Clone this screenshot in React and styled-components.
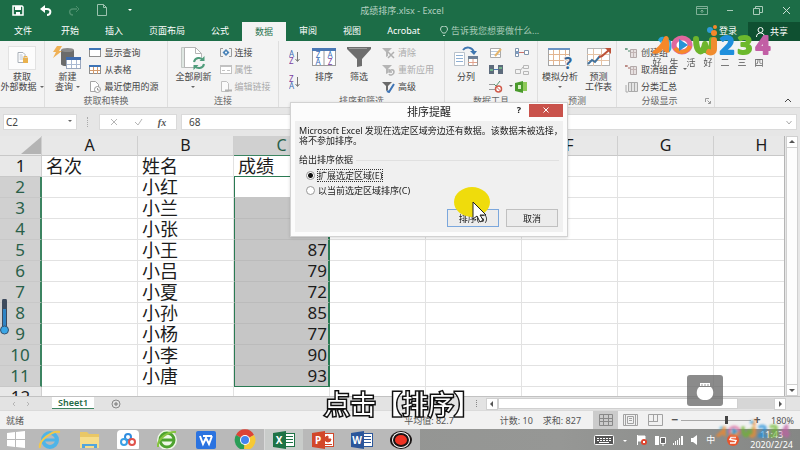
import React, { useState } from "react";
import styled, { createGlobalStyle, css } from "styled-components";

const GlobalStyle = createGlobalStyle`
  * {
    box-sizing: border-box;
  }
  body {
    margin: 0;
    overflow: hidden;
    font-family: "Noto Sans", "Noto Sans CJK SC", sans-serif;
    font-size: 9px;
    color: #444;
  }
  button, input {
    font: inherit;
    color: inherit;
    margin: 0;
    padding: 0;
    border: 0;
    background: none;
  }
  svg {
    display: block;
    flex: none;
  }
`;

const columns = ["A", "B", "C", "D", "E", "F", "G", "H"];

const rows = [
  ["名次", "姓名", "成绩"],
  ["", "小红", ""],
  ["", "小兰", ""],
  ["", "小张", ""],
  ["", "小王", "87"],
  ["", "小吕", "79"],
  ["", "小夏", "72"],
  ["", "小孙", "85"],
  ["", "小杨", "77"],
  ["", "小李", "90"],
  ["", "小唐", "93"],
  ["", "", ""],
];

const tabs = ["开始", "插入", "页面布局", "公式", "数据", "审阅", "视图", "Acrobat"];

/* ---------- ribbon icons ---------- */

const ExternalDataIcon = () => (
  <svg width="28" height="24" viewBox="0 0 28 24">
    <rect x="0.5" y="0.5" width="27" height="23" fill="#fcfcfc" stroke="#e2e2e2" />
    <path d="M10 6.500h5l2 2v8h-7z" fill="#fff" stroke="#a9b0b8" />
    <path d="M11.500 9h3M11.500 11h4M11.500 13h4" stroke="#b9c4d2" />
    <path d="M15 12h5v5h-5z" fill="#eab24e" />
    <path d="M16 12v-1.500h3V12" fill="none" stroke="#eab24e" />
  </svg>
);

const NewQueryIcon = () => (
  <svg width="28" height="24" viewBox="0 0 28 24">
    <path d="M8 4v14c0 3 13 3 13 0V4z" fill="#6b6b6b" />
    <ellipse cx="14.500" cy="4" rx="6.500" ry="2" fill="#8b8b8b" />
    <path d="M4 0h5L6 5h3L0 12l3-6H0z" fill="#efb055" />
    <rect x="13.500" y="11.500" width="14" height="11" fill="#fff" stroke="#9aa7bd" />
    <path d="M13 11h15v3H13z" fill="#3f6cae" />
    <path d="M14 18.500h13M18.500 14v8M23.500 14v8" stroke="#a9b9d2" />
  </svg>
);

const RefreshAllIcon = () => (
  <svg width="26" height="24" viewBox="0 0 26 24">
    <path d="M1.500 1.500h10v20h-10z" fill="#dfe7e2" stroke="#c2c7c4" />
    <path d="M4.500 1.500h11l6 6v14h-17z" fill="#fff" stroke="#b5b5b5" />
    <path d="M15.500 1.500v6h6" fill="none" stroke="#b5b5b5" />
    <circle cx="19" cy="17" r="6" fill="#f4f4f4" />
    <path d="M14 16c1-5 7-5 9-2M24 18c-1 5-7 5-9 2" fill="none" stroke="#4f9c7b" strokeWidth="2" />
    <path d="M24.500 10v5h-5zM13.500 24v-5h5z" fill="#4f9c7b" />
  </svg>
);

const SortIcon = () => (
  <svg width="24" height="22" viewBox="0 0 24 22">
    <rect x="0.500" y="2.500" width="23" height="17" fill="#fff" stroke="#9a9a9a" />
    <path d="M0 2h24v3H0z" fill="#4a78b4" />
    <path d="M12 5v15" stroke="#9a9a9a" />
    <g fontSize="8" fontFamily="Noto Sans" textAnchor="middle">
      <text x="6" y="12" fill="#3b6db5">Z</text>
      <text x="6" y="19" fill="#3b6db5">A</text>
      <text x="18" y="12" fill="#3b6db5">A</text>
      <text x="18" y="19" fill="#7a3fa0">Z</text>
    </g>
  </svg>
);

const FunnelIcon = () => (
  <svg width="24" height="22" viewBox="0 0 24 22">
    <path d="M0 1h24v2l-9 10v7l-5 1v-8L0 3z" fill="#6e6e6e" />
    <path d="M2 2.500h18" stroke="#9c9c9c" />
  </svg>
);

const TextToColumnsIcon = () => (
  <svg width="26" height="22" viewBox="0 0 26 22">
    <path d="M1.500 6.500h10v13h-10z" fill="#fff" stroke="#b9c2cb" />
    <path d="M3 9.500h7M3 12.500h7M3 15.500h7" stroke="#8fb0d4" />
    <path d="M15.500 11.500h9v8h-9z" fill="#fff" stroke="#999" />
    <path d="M15 10h10v3H15z" fill="#6e7f96" />
    <path d="M15 16.500h9M20 13v7" stroke="#e0a08a" />
    <path d="M10 4c3-4 9-3 11 2" fill="none" stroke="#3f76b0" strokeWidth="2" />
    <path d="M17 5h7l-3 4z" fill="#3f76b0" />
  </svg>
);

const WhatIfIcon = () => (
  <svg width="26" height="24" viewBox="0 0 26 24">
    <rect x="1.500" y="2.500" width="21" height="17" fill="#fff" stroke="#a4a4a4" />
    <path d="M1 2h22v2H1z" fill="#6b93c4" />
    <path d="M2 8.500h20M2 14.500h20M6.500 4v15M12.500 4v15M18.500 4v15" stroke="#e2b591" />
    <text x="21" y="23" fontSize="16" fontWeight="700" textAnchor="middle" fill="#336596" stroke="#f4f4f4" strokeWidth="2" paintOrder="stroke">?</text>
  </svg>
);

const ForecastIcon = () => (
  <svg width="26" height="24" viewBox="0 0 26 24">
    <rect x="1.500" y="2.500" width="22" height="17" fill="#fff" stroke="#b4b4b4" />
    <path d="M1 8.500h22M1 14.500h22M7.500 3v17M15.500 3v17" stroke="#e6c3a5" />
    <path d="M2 18l4-4 3 2 5-6" fill="none" stroke="#41719c" strokeWidth="2" />
    <path d="M13 11l3-1 7-6" fill="none" stroke="#bd5238" strokeWidth="2" />
    <path d="M19 2h6v6z" fill="#bd5238" />
  </svg>
);

const TableIcon = ({ split, dim }) => (
  <svg width="12" height="11" viewBox="0 0 12 11">
    <rect x="0.500" y="1.500" width="11" height="8" fill="#fff" stroke={dim ? "#c2c2c2" : "#8e8e8e"} />
    <path d="M0 1h12v2H0z" fill={dim ? "#c2c2c2" : "#3f74b5"} />
    {split && <path d="M1 6.500h10M4.500 3v7M8.500 3v7" stroke="#d39b6d" />}
    {dim && <path d="M2 6.500h3M7 6.500h3" stroke="#c2c2c2" />}
  </svg>
);

const RecentIcon = () => (
  <svg width="12" height="12" viewBox="0 0 12 12">
    <path d="M1.500 0.500h5l3 3v7h-8z" fill="#fff" stroke="#a5a5a5" />
    <circle cx="8.500" cy="8.500" r="3" fill="#fff" stroke="#9a9a9a" />
    <path d="M8.500 7v2h2" fill="none" stroke="#9a9a9a" />
  </svg>
);

const ConnectionsIcon = () => (
  <svg width="12" height="11" viewBox="0 0 12 11">
    <path d="M3 1.500H0.500v8H3M9 1.500h2.500v8H9" fill="none" stroke="#9b9b9b" />
    <path d="M6 2l3.500 3.500L6 9 2.500 5.500z" fill="#4a83b8" />
    <circle cx="6" cy="5.500" r="1" fill="#fff" />
  </svg>
);

const EditLinksIcon = () => (
  <svg width="12" height="12" viewBox="0 0 12 12">
    <path d="M1.500 0.500h5l2 2v8h-7z" fill="#fafafa" stroke="#c0c0c0" />
    <path d="M5 9.500h3M8 9.500h4" stroke="#b2b2b2" strokeWidth="2" />
  </svg>
);

const AzIcon = ({ top, bottom }) => (
  <svg width="12" height="14" viewBox="0 0 12 14">
    <g fontSize="8" fontFamily="Noto Sans">
      <text x="0" y="7" fill={top === "A" ? "#3b6db5" : "#7a3fa0"}>{top}</text>
      <text x="0" y="14" fill={bottom === "A" ? "#3b6db5" : "#7a3fa0"}>{bottom}</text>
    </g>
    <path d="M8.500 2v9M6.500 9l2 2.500 2-2.500" fill="none" stroke="#777" />
  </svg>
);

const SmallFilterIcon = ({ kind }) => (
  <svg width="13" height="12" viewBox="0 0 13 12">
    <path d="M0 1h10L6 5v4l-2 1V5z" fill={kind === "advanced" ? "#6a6a6a" : "#b5b5b5"} />
    {kind === "clear" && <path d="M6 5l6 6M12 5l-6 6" stroke="#b0b0b0" strokeWidth="1.500" />}
    {kind === "reapply" && (
      <path d="M7 5v3h3M7 8c1-3 5-3 5 0s-4 4-5 2" fill="none" stroke="#b0b0b0" strokeWidth="1.500" />
    )}
    {kind === "advanced" && <path d="M5 10l2 1 5-8" fill="none" stroke="#3f74b5" strokeWidth="2" />}
  </svg>
);

const OutlineIcon = ({ kind }) => (
  <svg width="13" height="12" viewBox="0 0 13 12">
    {kind === "total" ? (
      <>
        <path d="M3.500 1.500h9v9h-9z" fill="#e4e4e4" stroke="#aaa" />
        <path d="M6.500 2v8M9.500 2v8M1 4v7h2" fill="none" stroke="#aaa" />
      </>
    ) : (
      <>
        <path d="M5.500 2.500h6v8h-6z" fill="#e6e0e0" stroke="#b3a9a9" />
        <path d="M6 5.500h5M8.500 3v7" stroke="#c3b5b5" />
        <path d="M0 2h3M3 4h2M1 1v2" stroke={kind === "group" ? "#4e8a6c" : "#a86a63"} />
      </>
    )}
  </svg>
);

const ToolIcon = ({ kind }) => (
  <svg width="14" height="12" viewBox="0 0 14 12">
    {kind === "fill" && (
      <>
        <path d="M1.500 1.500h10v9h-10z" fill="#fff" stroke="#aaa" />
        <path d="M2 4.500h9M2 7.500h9" stroke="#b9c9dc" />
        <path d="M6 9l6-7" stroke="#e5b56c" strokeWidth="2" />
      </>
    )}
    {kind === "dedupe" && (
      <>
        <path d="M0 1h5v9H0z" fill="#5d6b7c" />
        <path d="M9 1h5v9H9z" fill="#5d6b7c" />
        <path d="M1 5h3v2H1zM10 3h3v2h-3z" fill="#72b389" />
        <path d="M5 5.500h4" stroke="#4a78b4" />
      </>
    )}
    {kind === "validate" && (
      <>
        <path d="M0 3.500h6M0 8.500h6" stroke="#9a9a9a" />
        <path d="M5 3l2 2 4-5" fill="none" stroke="#5a9474" />
        <circle cx="9.500" cy="8" r="3" fill="#fff" stroke="#d05b4b" strokeWidth="1.500" />
        <path d="M7.500 6l4 4" stroke="#d05b4b" />
      </>
    )}
    {kind === "merge" && (
      <>
        <path d="M0.500 1.500h3v8h-3zM9.500 3.500h4v4h-4z" fill="#fff" stroke="#8195ac" />
        <path d="M4 5.500h5" stroke="#c9716a" />
        <path d="M1 4h3v3H1z" fill="#7f9cc0" />
      </>
    )}
    {kind === "relation" && (
      <path d="M0.500 5.500h5v4h-5zM8.500 1.500h5v3h-5zM8.500 7.500h5v3h-5zM5 7l3-4" fill="none" stroke="#b7b7b7" />
    )}
    {kind === "model" && (
      <>
        <path d="M0 2l8-2v12l-8-2z" fill="#4a9a2c" />
        <path d="M8 1h4v9H8z" fill="#8fca5a" />
        <path d="M3 4h3v4H3z" fill="#d7efc5" />
      </>
    )}
  </svg>
);

/* ---------- logo ---------- */

const Logo = ({ width, height }) => (
  <svg width={width} height={height} viewBox="0 0 124 32">
    <path d="M2 28c2-4 8-6 11-14 1-4 6-4 6 1l1 12c-3 2-6 0-7-3-2 4-7 6-11 4z" fill="#f6882a" />
    <path d="M8 15c1-3 4-4 6-3l-3 6z" fill="#28a4dc" />
    <path d="M16 13c5 2 3 9 3 14 3-1 3-6 2-11z" fill="#35a7dc" />
    <ellipse cx="32" cy="20" rx="8" ry="7" fill="#fff" stroke="#e0679e" strokeWidth="5" />
    <path d="M25 23c4 6 12 5 15-2" fill="none" stroke="#f6882a" strokeWidth="4" />
    <path d="M29 14l9 6-9 6z" fill="#2793d6" />
    <path d="M46 14c0 15 7 16 9 5 1 11 7 9 7-4" fill="none" stroke="#6db52c" strokeWidth="6" strokeLinecap="round" strokeLinejoin="round" />
    <path d="M64 15v9c0 3-3 4-5 3" fill="none" stroke="#f08c2e" strokeWidth="6" strokeLinecap="round" />
    <circle cx="60" cy="5" r="3" fill="#2f9bd7" />
    <circle cx="65" cy="2" r="2" fill="#f6882a" />
    <circle cx="64" cy="8" r="3" fill="#f6882a" />
    <g fontSize="25" fontWeight="700" fontFamily="Noto Sans" textAnchor="middle" strokeWidth="2" strokeLinejoin="round">
      <text x="77" y="29" fill="#1f8fdc" stroke="#1f8fdc">2</text>
      <text x="95" y="29" fill="#6cb92d" stroke="#6cb92d">3</text>
      <text x="113" y="29" fill="#c25fa5" stroke="#c25fa5">4</text>
    </g>
  </svg>
);

/* ---------- taskbar icons ---------- */

const OfficeMark = ({ name }) => {
  const [color, letter] = {
    excel: ["#1f7346", "X"],
    ppt: ["#d2472a", "P"],
    word: ["#2b569a", "W"],
  }[name];
  return (
    <>
      <rect x="11.500" y="4.500" width="11" height="13" fill="#fff" stroke={color} />
      {name === "ppt" ? (
        <path d="M17 7a3 3 0 1 0 3 3h-3zM14 15.500h7" fill={color} stroke={color} />
      ) : (
        <path d="M14 7.500h7M14 10.500h7M14 13.500h7" stroke={color} />
      )}
      <path d="M1 4l13-2v18L1 18z" fill={color} />
      <text x="7" y="15" fontSize="10" fontWeight="700" textAnchor="middle" fill="#fff">{letter}</text>
    </>
  );
};

const AppIcon = ({ name }) => (
  <svg width="24" height="20" viewBox="0 0 24 20">
    {name === "windows" && (
      <path d="M3 4l8-1v7H3zM12 3l9-1v8h-9zM3 11h8v7l-8-1zM12 11h9v8l-9-1z" fill="#fff" />
    )}
    {name === "ie" && (
      <>
        <circle cx="12" cy="11" r="7" fill="none" stroke="#4fb4e8" strokeWidth="4" />
        <path d="M7 11h12" stroke="#4fb4e8" strokeWidth="3" />
        <path d="M2 19C0 12 14 1 22 3" fill="none" stroke="#f1c84c" strokeWidth="2" />
      </>
    )}
    {name === "folder" && (
      <>
        <path d="M3 3h7l2 2h10v14H3z" fill="#e9c766" />
        <path d="M3 8h19v11H3z" fill="#f6dd8b" />
        <path d="M5 19v-4h15v4h-3v-2H8v2z" fill="#53a5dc" />
      </>
    )}
    {name === "baidu" && (
      <>
        <rect x="1" y="1" width="22" height="21" rx="4" fill="#fff" />
        <circle cx="12" cy="8" r="3" fill="none" stroke="#2f8ce0" strokeWidth="2" />
        <circle cx="8" cy="13" r="3" fill="none" stroke="#3aa0e6" strokeWidth="2" />
        <circle cx="16" cy="13" r="3" fill="none" stroke="#e0524b" strokeWidth="2" />
      </>
    )}
    {name === "browser360" && (
      <>
        <circle cx="12" cy="11" r="10" fill="#eef7e6" />
        <circle cx="12" cy="11" r="7" fill="none" stroke="#4da32f" strokeWidth="3" />
        <path d="M6 11h13" stroke="#4da32f" strokeWidth="3" />
        <path d="M3 18C2 10 13 2 21 3" fill="none" stroke="#86c440" strokeWidth="2" />
      </>
    )}
    {name === "wps" && (
      <>
        <rect x="2" y="2" width="20" height="18" rx="2" fill="#2b73e0" />
        <path d="M6 7l3 8 3-6 3 6 3-8M9 7h9" fill="none" stroke="#fff" strokeWidth="2" />
      </>
    )}
    {name === "chrome" && (
      <>
        <path d="M12 11L3 6a10 10 0 0 1 18 0z" fill="#dc4437" />
        <path d="M12 11L3 6a10 10 0 0 0 8 15z" fill="#2a9d57" />
        <path d="M12 11l9-5a10 10 0 0 1-10 15z" fill="#f6c935" />
        <circle cx="12" cy="11" r="5" fill="#fff" />
        <circle cx="12" cy="11" r="4" fill="#4484f0" />
      </>
    )}
    {["excel", "ppt", "word"].includes(name) && <OfficeMark name={name} />}
    {name === "record" && (
      <>
        <ellipse cx="12" cy="11" rx="11" ry="9" fill="#1b1414" />
        <ellipse cx="12" cy="11" rx="9" ry="8" fill="#fff" />
        <ellipse cx="12" cy="11" rx="8" ry="7" fill="#1b1414" />
        <ellipse cx="12" cy="11" rx="6" ry="5" fill="#ef3324" />
      </>
    )}
  </svg>
);

/* ---------- window chrome ---------- */

const Window = styled.div`
  display: flex;
  flex-direction: column;
  height: 100vh;
  background: #e6e6e6;
`;

const TitleBar = styled.header`
  display: grid;
  grid-template-columns: 1fr auto 1fr;
  align-items: center;
  height: 20px;
  padding: 0 8px 0 12px;
  background: #1c6d47;
  color: #b4d0c1;
`;

const QuickAccess = styled.div`
  display: flex;
  align-items: center;
  gap: 16px;
`;

const WindowButtons = styled.div`
  display: flex;
  justify-content: flex-end;
  align-items: center;
  gap: 16px;
`;

const IconButton = styled.button`
  display: flex;
  align-items: center;
  justify-content: center;
  min-width: 12px;
  height: 14px;
`;

const TabBar = styled.nav`
  display: flex;
  align-items: center;
  height: 21px;
  background: #1c6d47;
  color: #fff;
  line-height: 19px;
`;

const Tab = styled.button`
  height: 100%;
  padding: 0 13px;
  white-space: nowrap;
  ${({ $active }) =>
    $active &&
    css`
      height: 19px;
      align-self: flex-end;
      background: #f3f3f3;
      color: #2a7350;
    `}
`;

const FileTab = styled(Tab)`
  padding: 0 16px 0 14px;
`;

const TellMe = styled.button`
  display: flex;
  align-items: center;
  gap: 3px;
  margin-left: 7px;
  color: #a9cbb9;
`;

const SignIn = styled.button`
  margin-left: auto;
  padding: 0 11px;
`;

const Share = styled.button`
  display: flex;
  align-items: center;
  gap: 5px;
  height: 19px;
  padding: 0 12px 0 8px;
  align-self: flex-end;
  background: #0f5031;
`;

const Ribbon = styled.section`
  display: flex;
  height: 67px;
  background: #f3f3f3;
  border-bottom: 1px solid #d5d5d5;
`;

const Group = styled.div`
  display: flex;
  flex-direction: column;
  flex: none;
  width: ${({ $width }) => $width}px;
  padding-top: 3px;
  border-right: 1px solid #dedede;
`;

const GroupBody = styled.div`
  display: flex;
  justify-content: ${({ $start }) => ($start ? "flex-start" : "center")};
  gap: ${({ $gap }) => $gap || 8}px;
  height: 51px;
  padding: 0 ${({ $start }) => ($start ? 8 : 0)}px;
`;

const GroupLabel = styled.div`
  display: flex;
  align-items: center;
  height: 12px;
  line-height: 12px;
  color: #666;

  span {
    flex: 1;
    text-align: center;
  }
`;

const BigButton = styled.button`
  display: flex;
  flex-direction: column;
  align-items: center;
  padding-top: 2px;
  line-height: 10px;
  white-space: nowrap;
`;

const BigIcon = styled.span`
  display: flex;
  height: 26px;
`;

const SmallStack = styled.div`
  display: grid;
  grid-template-rows: repeat(${({ $rows }) => $rows || 3}, 1fr);
  column-gap: 2px;
  grid-auto-flow: column;
  align-items: center;
`;

const SmallButton = styled.button`
  display: flex;
  align-items: center;
  gap: 3px;
  line-height: 12px;
  white-space: nowrap;
  color: ${({ disabled }) => (disabled ? "#aaa" : "#444")};
`;

const Caret = styled.span`
  display: inline-block;
  margin: 0 0 2px 3px;
  border: 2px solid transparent;
  border-top-color: #666;
  border-bottom: 0;
`;

const LoneCaret = styled(Caret)`
  margin: 4px 0 0;
`;

const RibbonEnd = styled.div`
  display: flex;
  flex: 1;
  align-items: flex-end;
  justify-content: flex-end;
  padding: 0 6px 0 0;
`;

const FormulaBar = styled.div`
  display: flex;
  align-items: center;
  height: 28px;
  padding: 0 3px;
  gap: 4px;
`;

const NameBox = styled.div`
  display: flex;
  align-items: center;
  width: 74px;
  height: 16px;
  padding-right: 4px;
  background: #fff;
  border: 1px solid #dadada;

  input {
    flex: 1;
    min-width: 0;
    padding-left: 2px;
    font-size: 10px;
  }
`;

const Grip = styled.span`
  width: 7px;
  height: 10px;
  border-right: 1px dotted #aaa;
  margin-right: 7px;
`;

const FormulaButtons = styled.div`
  display: flex;
  align-items: center;
  justify-content: space-between;
  width: 78px;
  height: 16px;
  padding: 0 8px;
  background: #fff;
  border: 1px solid #dadada;
  color: #aaa;
`;

const FxButton = styled(IconButton)`
  font-family: "Liberation Serif", serif;
  font-style: italic;
  font-weight: 700;
  font-size: 10px;
  color: #555;
`;

const FormulaField = styled.div`
  display: flex;
  align-items: center;
  flex: 1;
  height: 16px;
  padding-right: 4px;
  background: #fff;
  border: 1px solid #dadada;

  input {
    flex: 1;
    padding-left: 7px;
    font-size: 10px;
  }
`;

/* ---------- sheet ---------- */

const Workspace = styled.main`
  display: flex;
  flex: 1;
  min-height: 0;
`;

const SheetArea = styled.div`
  flex: 1;
  min-width: 0;
  overflow: hidden;
  background: #fff;
  border-right: 1px solid #b5b5b5;
`;

const Sheet = styled.table`
  table-layout: fixed;
  width: 810px;
  border-collapse: separate;
  border-spacing: 0;
  color: #1c1c1c;
`;

const ColumnHead = styled.th`
  width: ${({ $corner }) => ($corner ? 42 : 96)}px;
  height: 20px;
  padding: 0;
  font-size: 16px;
  font-weight: 400;
  line-height: 19px;
  background: ${({ $selected }) => ($selected ? "#d0d0d0" : "#e8e8e8")};
  color: ${({ $selected }) => ($selected ? "#2a6049" : "#1c1c1c")};
  border-right: 1px solid #cfcfcf;
  border-bottom: 1px solid ${({ $selected }) => ($selected ? "#3c8461" : "#c8c8c8")};
`;

const CornerMark = styled.span`
  display: block;
  width: 0;
  margin-left: auto;
  border-left: 20px solid transparent;
  border-bottom: 17px solid #b4b4b4;
`;

const RowHead = styled.th`
  height: 21px;
  padding: 0;
  font-size: 17px;
  font-weight: 400;
  line-height: 20px;
  background: ${({ $selected }) => ($selected ? "#d0d0d0" : "#e8e8e8")};
  color: ${({ $selected }) => ($selected ? "#2a6049" : "#1c1c1c")};
  border-bottom: 1px solid #c8c8c8;
  border-right: ${({ $selected }) => ($selected ? "2px solid #3c8461" : "1px solid #cfcfcf")};
`;

const Cell = styled.td`
  height: 21px;
  padding: 0 1px 0 4px;
  overflow: hidden;
  font-size: ${({ $number }) => ($number ? 17 : 18)}px;
  line-height: 20px;
  text-align: ${({ $number }) => ($number ? "right" : "left")};
  white-space: nowrap;
  border-right: 1px solid #e2e2e2;
  border-bottom: 1px solid #e2e2e2;
  ${({ $selected }) =>
    $selected &&
    css`
      background: #c6c6c6;
      border-bottom-color: #bbb;
      border-left: 1px solid #2a7a53;
      border-right: 2px solid #2a7a53;
    `}
  ${({ $edge }) => $edge === "top" && "background: #fff; border-bottom-color: #c6c6c6;"}
  ${({ $edge }) => ($edge === "bottom" || $edge === "above") && "border-bottom: 1px solid #2a7a53;"}
`;

const VScroll = styled.div`
  display: flex;
  flex-direction: column;
  justify-content: space-between;
  width: 12px;
  margin: 0 2px 0 1px;
  background: #fdfdfd;
  border: 1px solid #d0d0d0;
`;

const ScrollButton = styled.button`
  display: flex;
  align-items: center;
  justify-content: center;
  width: 10px;
  height: 10px;
  background: #fff;
  outline: 1px solid #d0d0d0;
`;

const SheetBar = styled.div`
  display: flex;
  align-items: center;
  height: 14px;
  padding-right: 15px;
  background: #e3e3e3;
  border-top: 1px solid #c2c2c2;
`;

const SheetNav = styled.div`
  display: flex;
  gap: 10px;
  width: 52px;
  padding-left: 12px;
`;

const SheetTab = styled.button`
  height: 12px;
  padding: 0 6px;
  align-self: flex-start;
  background: #fff;
  border-bottom: 1px solid #3c8461;
  color: #1f6a45;
  font-weight: 600;
  line-height: 11px;
`;

const AddSheet = styled.button`
  margin-left: 17px;
`;

const SheetSpacer = styled.span`
  flex: 1;
`;

const SplitGrip = styled.span`
  height: 7px;
  margin-right: 10px;
  border-left: 1px dotted #888;
`;

const HScroll = styled.div`
  display: flex;
  align-items: center;
  width: 38%;
  height: 11px;
  background: #d6d6d6;
`;

const HThumb = styled.span`
  width: 240px;
  height: 11px;
  margin: 0 auto 0 1px;
  background: #fff;
  border: 1px solid #d0d0d0;
`;

const StatusBar = styled.footer`
  display: flex;
  align-items: center;
  height: 19px;
  padding: 0 6px;
  background: #f1f1f1;
  border-top: 1px solid #dadada;
  color: #555;
  white-space: nowrap;
`;

const Stats = styled.div`
  display: flex;
  gap: 10px;
  margin: 0 12px 0 auto;

  span:first-child {
    margin-right: 36px;
  }
`;

const ViewButton = styled(IconButton)`
  width: 25px;
  height: 18px;
  background: ${({ $active }) => ($active ? "#cbcbcb" : "transparent")};
`;

const ZoomControl = styled.label`
  display: flex;
  align-items: center;
  gap: 2px;
  margin: 0 10px 0 3px;

  input {
    appearance: none;
    width: 70px;
    height: 10px;
  }
  input::-webkit-slider-runnable-track {
    height: 1px;
    background: #a8a8a8;
  }
  input::-webkit-slider-thumb {
    appearance: none;
    width: 3px;
    height: 8px;
    margin-top: -4px;
    background: #444;
  }
`;

const ZoomStep = styled.button`
  width: 8px;
  font-size: 12px;
  font-weight: 700;
  line-height: 12px;
`;

/* ---------- taskbar ---------- */

const Taskbar = styled.div`
  display: flex;
  height: 21px;
  overflow: hidden;
  background: linear-gradient(90deg, #8f918f, #969795 70%, #858785);
`;

const Apps = styled.div`
  display: flex;
  background: #b9b9b9;
`;

const AppButton = styled.button`
  display: flex;
  justify-content: center;
  width: ${({ $first }) => ($first ? 30 : 39)}px;
  height: 21px;
  background: ${({ $open }) => ($open ? "#c9ccca" : "transparent")};
  border-left: 1px solid ${({ $open }) => ($open ? "#d9d9d9" : "transparent")};
`;

const Tray = styled.div`
  display: flex;
  align-items: center;
  gap: 6px;
  margin-left: auto;
  padding-right: 7px;
  color: #fff;
`;

const Clock = styled.time`
  margin-left: 3px;
  line-height: 10px;
  text-align: center;
`;

/* ---------- dialog ---------- */

const Dialog = styled.section`
  position: fixed;
  left: 50%;
  top: 102px;
  width: 278px;
  margin-left: -110px;
  padding: 0 4px 4px;
  background: #fcfcfc;
  border: 1px solid #d2d2d2;
  box-shadow: 0 1px 3px rgba(0, 0, 0, 0.15);
  color: #222;
`;

const DialogTitle = styled.div`
  display: grid;
  grid-template-columns: 1fr auto 1fr;
  align-items: start;
  height: 18px;

  h1 {
    margin: 0;
    font-size: 11px;
    font-weight: 400;
    line-height: 18px;
  }
`;

const DialogTools = styled.div`
  display: flex;
  justify-content: flex-end;
  align-items: center;
`;

const HelpButton = styled.button`
  width: 20px;
  font-weight: 700;
  line-height: 14px;
`;

const CloseButton = styled.button`
  display: flex;
  align-items: center;
  justify-content: center;
  width: 34px;
  height: 13px;
  background: #c9524b;
`;

const DialogBody = styled.form`
  padding: 5px 4px 5px;
  background: #f0f0f0;

  p {
    margin: 0;
    line-height: 10px;
    white-space: nowrap;
  }
`;

const Options = styled.fieldset`
  margin: 7px 0 0;
  padding: 1px 0 0 7px;
  border: 0;
  border-top: 1px solid #e0e0e0;

  legend {
    margin-left: -7px;
    padding: 0 3px 0 0;
    line-height: 14px;
  }
`;

const Option = styled.label`
  display: flex;
  align-items: center;
  gap: 2px;
  height: 15px;
  line-height: 11px;

  input {
    appearance: none;
    width: 9px;
    height: 9px;
    border: 1px solid #999;
    border-radius: 50%;
    background: #fff;
  }
  input:checked {
    background: radial-gradient(circle, #111 2px, #fff 3px);
  }
  span {
    border: 1px solid transparent;
  }
  input:checked + span {
    border: 1px dotted #333;
  }
`;

const DialogActions = styled.div`
  display: flex;
  justify-content: flex-end;
  gap: 7px;
  margin: 11px 1px 0 0;
`;

const DialogButton = styled.button`
  width: 52px;
  height: 18px;
  background: #ececec;
  border: 1px solid ${({ $primary }) => ($primary ? "#7ba7dc" : "#c0c0c0")};
`;

/* ---------- overlays ---------- */

const Pointer = styled.svg`
  position: fixed;
  left: 50%;
  top: 186px;
  margin-left: 53px;
  pointer-events: none;
`;

const Brand = styled.div`
  position: fixed;
  right: 26px;
  top: 25px;
  display: flex;
  flex-direction: column;
  align-items: center;
`;

const Slogan = styled.div`
  display: flex;
  gap: 8px;
  margin-right: 8px;
  line-height: 12px;
  color: #555;
`;

const GhostBrand = styled.div`
  position: fixed;
  right: 8px;
  top: 419px;
  opacity: 0.7;
  filter: blur(1px);
`;

const Caption = styled.div`
  position: fixed;
  left: 4px;
  right: 0;
  bottom: 30px;
  text-align: center;
  font-size: 26px;
  line-height: 32px;
  color: #fff;
  -webkit-text-stroke: 3px #111;
  paint-order: stroke fill;
  pointer-events: none;
`;

const Assistant = styled.button`
  position: fixed;
  right: 77px;
  bottom: 44px;
  display: flex;
  align-items: center;
  justify-content: center;
  width: 36px;
  height: 31px;
  border-radius: 3px;
  background: rgba(110, 110, 110, 0.8);
`;

const SideMeter = styled.svg`
  position: fixed;
  left: 0;
  top: 299px;
`;

const Arrow = ({ d }) => (
  <svg width="6" height="6" viewBox="0 0 6 6">
    <path d={d} fill="#555" />
  </svg>
);

function RibbonBar() {
  return (
    <Ribbon>
      <Group $width={45}>
        <GroupBody>
          <BigButton>
            <BigIcon><ExternalDataIcon /></BigIcon>
            <span>获取</span>
            <span>外部数据<Caret /></span>
          </BigButton>
        </GroupBody>
      </Group>
      <Group $width={123}>
        <GroupBody>
          <BigButton>
            <BigIcon><NewQueryIcon /></BigIcon>
            <span>新建</span>
            <span>查询<Caret /></span>
          </BigButton>
          <SmallStack>
            <SmallButton><TableIcon />显示查询</SmallButton>
            <SmallButton><TableIcon split />从表格</SmallButton>
            <SmallButton><RecentIcon />最近使用的源</SmallButton>
          </SmallStack>
        </GroupBody>
        <GroupLabel><span>获取和转换</span></GroupLabel>
      </Group>
      <Group $width={111}>
        <GroupBody>
          <BigButton>
            <BigIcon><RefreshAllIcon /></BigIcon>
            <span>全部刷新</span>
            <LoneCaret />
          </BigButton>
          <SmallStack>
            <SmallButton><ConnectionsIcon />连接</SmallButton>
            <SmallButton disabled><TableIcon dim />属性</SmallButton>
            <SmallButton disabled><EditLinksIcon />编辑链接</SmallButton>
          </SmallStack>
        </GroupBody>
        <GroupLabel><span>连接</span></GroupLabel>
      </Group>
      <Group $width={166}>
        <GroupBody $gap={11}>
          <SmallStack $rows={2}>
            <SmallButton aria-label="升序"><AzIcon top="A" bottom="Z" /></SmallButton>
            <SmallButton aria-label="降序"><AzIcon top="Z" bottom="A" /></SmallButton>
          </SmallStack>
          <BigButton>
            <BigIcon><SortIcon /></BigIcon>
            <span>排序</span>
          </BigButton>
          <BigButton>
            <BigIcon><FunnelIcon /></BigIcon>
            <span>筛选</span>
          </BigButton>
          <SmallStack>
            <SmallButton disabled><SmallFilterIcon kind="clear" />清除</SmallButton>
            <SmallButton disabled><SmallFilterIcon kind="reapply" />重新应用</SmallButton>
            <SmallButton><SmallFilterIcon kind="advanced" />高级</SmallButton>
          </SmallStack>
        </GroupBody>
        <GroupLabel><span>排序和筛选</span></GroupLabel>
      </Group>
      <Group $width={93}>
        <GroupBody $gap={10}>
          <BigButton>
            <BigIcon><TextToColumnsIcon /></BigIcon>
            <span>分列</span>
          </BigButton>
          <SmallStack>
            <SmallButton aria-label="快速填充"><ToolIcon kind="fill" /></SmallButton>
            <SmallButton aria-label="删除重复项"><ToolIcon kind="dedupe" /></SmallButton>
            <SmallButton aria-label="数据验证"><ToolIcon kind="validate" /><Caret /></SmallButton>
            <SmallButton aria-label="合并计算"><ToolIcon kind="merge" /></SmallButton>
            <SmallButton aria-label="关系"><ToolIcon kind="relation" /></SmallButton>
            <SmallButton aria-label="管理数据模型"><ToolIcon kind="model" /></SmallButton>
          </SmallStack>
        </GroupBody>
        <GroupLabel><span>数据工具</span></GroupLabel>
      </Group>
      <Group $width={79}>
        <GroupBody $gap={7}>
          <BigButton>
            <BigIcon><WhatIfIcon /></BigIcon>
            <span>模拟分析</span>
            <LoneCaret />
          </BigButton>
          <BigButton>
            <BigIcon><ForecastIcon /></BigIcon>
            <span>预测</span>
            <span>工作表</span>
          </BigButton>
        </GroupBody>
        <GroupLabel><span>预测</span></GroupLabel>
      </Group>
      <Group $width={98}>
        <GroupBody $start>
          <SmallStack>
            <SmallButton><OutlineIcon kind="group" />创建组</SmallButton>
            <SmallButton><OutlineIcon kind="ungroup" />取消组合<Caret /></SmallButton>
            <SmallButton><OutlineIcon kind="total" />分类汇总</SmallButton>
          </SmallStack>
        </GroupBody>
        <GroupLabel>
          <span>分级显示</span>
          <IconButton aria-label="分级显示设置">
            <svg width="6" height="6" viewBox="0 0 6 6">
              <path d="M0.500 4V0.500H4M2.500 2.500L5 5M5.500 3v2.500H3" fill="none" stroke="#999" />
            </svg>
          </IconButton>
        </GroupLabel>
      </Group>
      <RibbonEnd>
        <IconButton aria-label="折叠功能区">
          <svg width="8" height="6" viewBox="0 0 8 6">
            <path d="M1 5l3-3 3 3" fill="none" stroke="#444" />
          </svg>
        </IconButton>
      </RibbonEnd>
    </Ribbon>
  );
}

function SheetGrid() {
  const isSelected = (row) => row >= 2 && row <= 11;
  const edgeOf = (row) => ({ 1: "above", 2: "top", 11: "bottom" })[row];

  return (
    <SheetArea>
      <Sheet>
        <thead>
          <tr>
            <ColumnHead $corner><CornerMark /></ColumnHead>
            {columns.map((name) => (
              <ColumnHead key={name} $selected={name === "C"}>{name}</ColumnHead>
            ))}
          </tr>
        </thead>
        <tbody>
          {rows.map((cells, index) => {
            const row = index + 1;
            return (
              <tr key={row}>
                <RowHead $selected={isSelected(row)}>{row}</RowHead>
                {columns.map((name, col) => (
                  <Cell
                    key={name}
                    $number={name === "C" && row > 1}
                    $selected={name === "C" && isSelected(row)}
                    $edge={name === "C" ? edgeOf(row) : undefined}
                  >
                    {cells[col]}
                  </Cell>
                ))}
              </tr>
            );
          })}
        </tbody>
      </Sheet>
    </SheetArea>
  );
}

function SortDialog() {
  const [scope, setScope] = useState("expand");
  return (
    <Dialog role="dialog" aria-labelledby="sort-title">
      <DialogTitle>
        <span />
        <h1 id="sort-title">排序提醒</h1>
        <DialogTools>
          <HelpButton>?</HelpButton>
          <CloseButton aria-label="关闭">
            <svg width="6" height="6" viewBox="0 0 6 6">
              <path d="M0.500 0.500l5 5M5.500 0.500l-5 5" stroke="#fff" />
            </svg>
          </CloseButton>
        </DialogTools>
      </DialogTitle>
      <DialogBody onSubmit={(e) => e.preventDefault()}>
        <p>
          Microsoft Excel 发现在选定区域旁边还有数据。该数据未被选择，
          <br />
          将不参加排序。
        </p>
        <Options>
          <legend>给出排序依据</legend>
          <Option>
            <input type="radio" name="scope" checked={scope === "expand"} onChange={() => setScope("expand")} />
            <span>扩展选定区域(E)</span>
          </Option>
          <Option>
            <input type="radio" name="scope" checked={scope === "current"} onChange={() => setScope("current")} />
            <span>以当前选定区域排序(C)</span>
          </Option>
        </Options>
        <DialogActions>
          <DialogButton type="submit" $primary>排序(S)</DialogButton>
          <DialogButton type="button">取消</DialogButton>
        </DialogActions>
      </DialogBody>
    </Dialog>
  );
}

function SystemTray() {
  return (
    <Tray>
      <svg width="20" height="12" viewBox="0 0 20 12">
        <rect x="0.500" y="1.500" width="19" height="9" rx="1" fill="#555" stroke="#fff" />
        <path d="M3 4.500h14M3 6.500h14" stroke="#fff" strokeDasharray="2 1" />
        <path d="M5 8.500h10" stroke="#fff" />
      </svg>
      <svg width="10" height="12" viewBox="0 0 10 12">
        <path d="M3 6h4l-2 2z" fill="#fff" />
      </svg>
      <svg width="12" height="12" viewBox="0 0 12 12">
        <path d="M1.500 1v10M2 2h7v5H2z" fill="#fff" stroke="#fff" />
        <circle cx="8" cy="8" r="3" fill="#e0452f" />
        <path d="M7 7l2 2M9 7l-2 2" stroke="#fff" />
      </svg>
      <svg width="12" height="12" viewBox="0 0 12 12">
        <rect x="1" y="2" width="4" height="9" fill="#fff" />
        <path d="M6.500 3.500h5v6h-5zM9 10v2" fill="#666" stroke="#fff" />
      </svg>
      <svg width="12" height="12" viewBox="0 0 12 12">
        <path d="M1 9h1v2H1zM3 7h1v4H3zM5 6h1v5H5zM7 4h1v7H7zM9 2h2v9H9z" fill="#fff" />
      </svg>
      <svg width="10" height="12" viewBox="0 0 10 12">
        <path d="M1 4h2l4-3v10L3 8H1z" fill="#fff" />
      </svg>
      <span>中</span>
      <svg width="20" height="12" viewBox="0 0 20 12">
        <circle cx="12" cy="6" r="6" fill="#e8552d" />
        <path d="M15 3.500h-5l-1 2 6 1-1 2.500H9" fill="none" stroke="#fff" strokeWidth="1.500" />
      </svg>
      <Clock>
        11:43
        <br />
        2020/2/24
      </Clock>
    </Tray>
  );
}

export default function App() {
  const [zoom, setZoom] = useState(65);
  return (
    <Window>
      <GlobalStyle />
      <TitleBar>
        <QuickAccess>
          <IconButton aria-label="保存">
            <svg width="12" height="11" viewBox="0 0 12 11">
              <path d="M1 1h9l1 1v8H1z" fill="none" stroke="#fff" strokeWidth="1.500" />
              <path d="M3 1h6v4H3zM4 7h4v3H4z" fill="#fff" />
            </svg>
          </IconButton>
          <IconButton aria-label="撤销">
            <svg width="12" height="11" viewBox="0 0 12 11">
              <path d="M3 4h4c5 0 4 6 0 6" fill="none" stroke="#fff" strokeWidth="2" />
              <path d="M5 0v8L0 4z" fill="#fff" />
            </svg>
          </IconButton>
          <IconButton aria-label="恢复">
            <svg width="12" height="11" viewBox="0 0 12 11">
              <path d="M9 4H5c-5 0-4 6 0 6" fill="none" stroke="#4c8f6d" strokeWidth="1.500" />
              <path d="M8 1l3 3-3 3" fill="none" stroke="#4c8f6d" />
            </svg>
          </IconButton>
          <IconButton aria-label="新建">
            <svg width="12" height="12" viewBox="0 0 12 12">
              <path d="M1.500 0.500h6l3 3v8h-9zM7.500 0.500v3h3" fill="none" stroke="#9dc2af" />
            </svg>
          </IconButton>
          <IconButton aria-label="自定义快速访问工具栏">
            <svg width="6" height="4" viewBox="0 0 6 4">
              <path d="M1 1h4L3 3z" fill="#fff" />
            </svg>
          </IconButton>
        </QuickAccess>
        <span>成绩排序.xlsx - Excel</span>
        <WindowButtons>
          <IconButton aria-label="功能区显示选项">
            <svg width="12" height="9" viewBox="0 0 12 9">
              <path d="M0.500 0.500h11v8H0.500zM0.500 2.500h11M6 7V4M4.500 5.500L6 4l1.500 1.500" fill="none" stroke="#7fb097" />
            </svg>
          </IconButton>
          <IconButton aria-label="最小化">
            <svg width="8" height="8" viewBox="0 0 8 8">
              <path d="M1 4.500h6" stroke="#a9cbb9" />
            </svg>
          </IconButton>
          <IconButton aria-label="还原">
            <svg width="10" height="9" viewBox="0 0 10 9">
              <path d="M0.500 2.500h6v6h-6zM2.500 2.500v-2h7v6H7" fill="none" stroke="#a9cbb9" />
            </svg>
          </IconButton>
          <IconButton aria-label="关闭窗口">
            <svg width="9" height="9" viewBox="0 0 9 9">
              <path d="M1 1l7 7M8 1L1 8" stroke="#c9dfd3" />
            </svg>
          </IconButton>
        </WindowButtons>
      </TitleBar>
      <TabBar>
        <FileTab>文件</FileTab>
        {tabs.map((tab) => (
          <Tab key={tab} $active={tab === "数据"}>{tab}</Tab>
        ))}
        <TellMe>
          <svg width="8" height="10" viewBox="0 0 8 10">
            <path d="M2.500 7c0-1-2-2-2-4a3.500 3 0 0 1 7 0c0 2-2 3-2 4zM3 9.500h2" fill="none" stroke="#b9d5c7" />
          </svg>
          告诉我您想要做什么...
        </TellMe>
        <SignIn>登录</SignIn>
        <Share>
          <svg width="9" height="10" viewBox="0 0 9 10">
            <circle cx="4.500" cy="3" r="2.500" fill="none" stroke="#fff" />
            <path d="M0.500 10c0-3 2-4 4-4s4 1 4 4" fill="none" stroke="#fff" />
          </svg>
          共享
        </Share>
      </TabBar>
      <RibbonBar />
      <FormulaBar>
        <NameBox>
          <input aria-label="名称框" defaultValue="C2" />
          <Caret />
        </NameBox>
        <Grip />
        <FormulaButtons>
          <IconButton aria-label="取消输入">
            <svg width="8" height="8" viewBox="0 0 8 8">
              <path d="M1 1l6 6M7 1L1 7" stroke="#b5b5b5" />
            </svg>
          </IconButton>
          <IconButton aria-label="输入">
            <svg width="9" height="8" viewBox="0 0 9 8">
              <path d="M1 4l3 3 4-6" fill="none" stroke="#b5b5b5" />
            </svg>
          </IconButton>
          <FxButton>fx</FxButton>
        </FormulaButtons>
        <FormulaField>
          <input aria-label="编辑栏" defaultValue="68" />
          <svg width="6" height="5" viewBox="0 0 6 5">
            <path d="M0.500 1l2.500 3 2.500-3" fill="none" stroke="#aaa" />
          </svg>
        </FormulaField>
      </FormulaBar>
      <Workspace>
        <SheetGrid />
        <VScroll>
          <ScrollButton aria-label="向上滚动"><Arrow d="M0 4l3-3 3 3z" /></ScrollButton>
          <ScrollButton aria-label="向下滚动"><Arrow d="M0 2l3 3 3-3z" /></ScrollButton>
        </VScroll>
      </Workspace>
      <SheetBar>
        <SheetNav>
          <svg width="4" height="6" viewBox="0 0 4 6">
            <path d="M3 1L1 3l2 2" fill="none" stroke="#b5b5b5" />
          </svg>
          <svg width="4" height="6" viewBox="0 0 4 6">
            <path d="M1 1l2 2-2 2" fill="none" stroke="#b5b5b5" />
          </svg>
        </SheetNav>
        <SheetTab>Sheet1</SheetTab>
        <AddSheet aria-label="新工作表">
          <svg width="10" height="10" viewBox="0 0 10 10">
            <circle cx="5" cy="5" r="4" fill="none" stroke="#888" />
            <path d="M5 3v4M3 5h4" stroke="#777" />
          </svg>
        </AddSheet>
        <SheetSpacer />
        <SplitGrip />
        <HScroll>
          <ScrollButton aria-label="向左滚动"><Arrow d="M4 0L1 3l3 3z" /></ScrollButton>
          <HThumb />
          <ScrollButton aria-label="向右滚动"><Arrow d="M2 0l3 3-3 3z" /></ScrollButton>
        </HScroll>
      </SheetBar>
      <StatusBar>
        <span>就绪</span>
        <Stats>
          <span>平均值: 82.7</span>
          <span>计数: 10</span>
          <span>求和: 827</span>
        </Stats>
        <ViewButton $active aria-label="普通">
          <svg width="14" height="12" viewBox="0 0 14 12">
            <path d="M0.500 0.500h13v11H0.500zM0 4.500h14M0 7.500h14M4.500 0v12M9.500 0v12" fill="none" stroke="#888" />
          </svg>
        </ViewButton>
        <ViewButton aria-label="页面布局视图">
          <svg width="15" height="12" viewBox="0 0 15 12">
            <path d="M0.500 0.500h14v11H0.500zM4.500 2.500h6v7h-6zM6 4.500h3M6 6.500h3M2.500 1v10M12.500 1v10" fill="none" stroke="#a2a2a2" />
          </svg>
        </ViewButton>
        <ViewButton aria-label="分页预览">
          <svg width="15" height="12" viewBox="0 0 15 12">
            <path d="M0.500 0.500h14v11H0.500zM5.500 1v6M9.500 1v6M1 7.500h9" fill="none" stroke="#a2a2a2" />
          </svg>
        </ViewButton>
        <ZoomControl>
          <ZoomStep>−</ZoomStep>
          <input type="range" aria-label="缩放" value={zoom} onChange={(e) => setZoom(e.target.value)} />
          <ZoomStep>+</ZoomStep>
        </ZoomControl>
        <span>180%</span>
      </StatusBar>
      <Taskbar>
        <Apps>
          <AppButton $first aria-label="开始菜单"><AppIcon name="windows" /></AppButton>
          {["ie", "folder", "baidu", "browser360", "wps", "chrome", "excel", "ppt", "word", "record"].map((name) => (
            <AppButton key={name} $open={name === "excel"} aria-label={name}>
              <AppIcon name={name} />
            </AppButton>
          ))}
        </Apps>
        <SystemTray />
      </Taskbar>

      <SortDialog />
      <Pointer width="40" height="40" viewBox="0 0 40 40">
        <ellipse cx="19" cy="16" rx="18" ry="15" fill="#efdc0c" />
        <path d="M20 16v17l4-3 3 6 3-2-3-5h6z" fill="#fff" stroke="#222" />
      </Pointer>
      <Brand>
        <Logo width="124" height="32" />
        <Slogan>
          {[..."好生活好二三四"].map((char, i) => (
            <span key={i}>{char}</span>
          ))}
        </Slogan>
      </Brand>
      <GhostBrand>
        <Logo width="78" height="20" />
      </GhostBrand>
      <Caption>点击【排序】</Caption>
      <Assistant aria-label="助手">
        <svg width="18" height="18" viewBox="0 0 18 18">
          <path d="M4 1h10v3H4z" fill="#fff" />
          <path d="M3 5h12c4 4 3 13-6 13S-1 9 3 5z" fill="#fff" />
          <path d="M6 2v2M9 2v2M12 2v2" stroke="#999" />
        </svg>
      </Assistant>
      <SideMeter width="10" height="36" viewBox="0 0 10 36">
        <path d="M4.500 2v28" stroke="#3d4a5c" strokeWidth="5" strokeLinecap="round" />
        <path d="M4.500 10v20" stroke="#2f84c4" strokeWidth="3" />
        <circle cx="4.500" cy="31" r="4" fill="#3aa6e6" stroke="#37526e" />
      </SideMeter>
    </Window>
  );
}
